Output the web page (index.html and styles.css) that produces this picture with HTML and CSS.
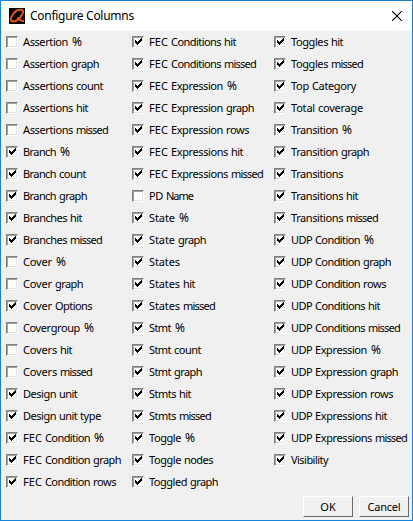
FILE: index.html
```
<!DOCTYPE html>
<html lang="en">
<head>
<meta charset="utf-8">
<title>Configure Columns</title>
<link rel="stylesheet" href="styles.css">
</head>
<body>
<div class="dialog">
  <header class="titlebar">
    <svg class="logo" viewBox="0 0 16 16"><rect width="16" height="16" fill="#000"/><path d="M5 5C6 3 8.500 1.700 11.500 1.700C16 1.700 14 6 11 9.500C8 13 4.500 14 2.500 13C0.500 11.500 3.500 5.500 7.500 3M8 10C10 10.500 11 13.500 15 12.800" fill="none" stroke="#e2560e" stroke-width="2"/></svg>
    <h1 class="title">Configure Columns</h1>
    <svg class="close" viewBox="0 0 10 10"><path d="M0 0L10 10M10 0L0 10" stroke="#000" stroke-width="1.1"/></svg>
  </header>
  <main class="columns">
    <div class="column" id="first"></div>
    <div class="column" id="second"></div>
    <div class="column" id="third"></div>
  </main>
  <footer class="actions">
    <button class="button">OK</button>
    <button class="button cancel">Cancel</button>
  </footer>
</div>
<script src="columns.js"></script>
</body>
</html>
```
FILE: styles.css
```
* { box-sizing: border-box; }
body { margin: 0; font-family: "Noto Sans", "DejaVu Sans", sans-serif; color: #000; }
.dialog { width: 413px; height: 521px; border: 1px solid #1883d7; background: #f0f0f0; display: flex; flex-direction: column; overflow: hidden; }
.titlebar { height: 30px; flex: none; background: #fff; display: flex; align-items: center; padding: 0 10px 0 8px; }
.logo { width: 16px; height: 16px; margin-right: 5px; }
.title { margin: 0; font-size: 12px; font-weight: 400; line-height: 16px; flex: 1; letter-spacing: -0.28px; }
.close { width: 10px; height: 10px; }
.columns { display: grid; grid-template-columns: 126px 142px 1fr; padding-left: 5px; }
.column { display: flex; flex-direction: column; }
.item { display: flex; align-items: center; height: 22px; gap: 5px; font-size: 11px; line-height: 22px; white-space: nowrap; }
.box { width: 12px; height: 12px; flex: none; background: #fff; border: 1px solid; border-color: #808080 #fff #fff #808080; box-shadow: inset 1px 1px #a0a0a0, inset -1px -1px #e3e3e3; }
.tick { display: block; width: 10px; height: 10px; shape-rendering: crispEdges; }
.name { display: flex; gap: 3px; }
.percent { font-size: 12px; padding-left: 1px; }
.actions { margin-top: auto; display: flex; justify-content: flex-end; gap: 6px; padding: 0 3px 3px 0; }
.button { width: 50px; height: 21px; padding: 0; font: 11px/17px "Noto Sans", sans-serif; color: #000; background: #f0f0f0; border: 1px solid; border-color: #fff #696969 #696969 #fff; }
.cancel { letter-spacing: -0.2px; }
```
FILE: columns.js
```
const columns = {
  first: "-Assertion %|-Assertion graph|-Assertions count|-Assertions hit|-Assertions missed|Branch %|Branch count|Branch graph|Branches hit|Branches missed|-Cover %|-Cover graph|Cover Options|-Covergroup %|-Covers hit|-Covers missed|Design unit|Design unit type|FEC Condition %|FEC Condition graph|FEC Condition rows",
  second: "FEC Conditions hit|FEC Conditions missed|FEC Expression %|FEC Expression graph|FEC Expression rows|FEC Expressions hit|FEC Expressions missed|-PD Name|State %|State graph|States|States hit|States missed|Stmt %|Stmt count|Stmt graph|Stmts hit|Stmts missed|Toggle %|Toggle nodes|Toggled graph",
  third: "Toggles hit|Toggles missed|Top Category|Total coverage|Transition %|Transition graph|Transitions|Transitions hit|Transitions missed|UDP Condition %|UDP Condition graph|UDP Condition rows|UDP Conditions hit|UDP Conditions missed|UDP Expression %|UDP Expression graph|UDP Expression rows|UDP Expressions hit|UDP Expressions missed|Visibility"
};
const tick = '<svg class="tick" viewBox="0 0 10 10"><path d="M2 3h1v1h1v1h1v-1h1v-1h1v-1h1v-1h1v3h-1v1h-1v1h-1v1h-1v1h-1v-1h-1v-1h-1z"/></svg>';

// Whole-pixel letter widths; every other letter is 6 wide.
const widths = { A: 7, C: 7, D: 8, N: 7, O: 8, U: 7, V: 7, c: 5, f: 4, i: 2, l: 2, m: 8, r: 4, s: 5, t: 4, w: 8, y: 5 };

const word = text => text === "%"
  ? '<span class="percent">%</span>'
  : `<span class="word">${text}</span>`;

// A leading "-" marks a column that is switched off.
for (const [id, list] of Object.entries(columns)) {
  document.getElementById(id).innerHTML = list.split("|").map(entry => {
    const off = entry.startsWith("-");
    const name = off ? entry.slice(1) : entry;
    return `<label class="item"><span class="box">${off ? "" : tick}</span><span class="name">${name.split(" ").map(word).join(" ")}</span></label>`;
  }).join("");
}

// Space each word out to the sum of its letter widths.
for (const el of document.querySelectorAll(".word")) {
  const text = el.textContent;
  const target = [...text].reduce((sum, ch) => sum + (widths[ch] || 6), 0);
  el.style.letterSpacing = (target - el.getBoundingClientRect().width) / text.length + "px";
}
```
